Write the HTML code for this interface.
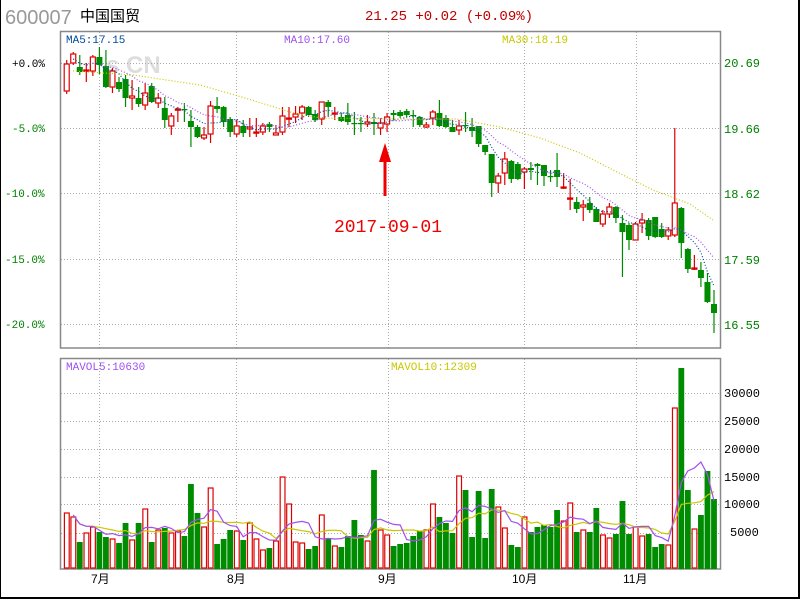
<!DOCTYPE html>
<html><head><meta charset="utf-8"><style>
body{margin:0;background:#fff;}
#w{position:relative;width:800px;height:600px;overflow:hidden;background:#fff;}
svg{position:absolute;left:0;top:0;}
</style></head><body><div id="w">
<svg id="s" width="800" height="600" xmlns="http://www.w3.org/2000/svg" font-family="Liberation Sans, Noto Sans CJK SC, sans-serif">
<rect x="0" y="-2" width="799" height="600" fill="none" stroke="#000" stroke-width="2"/>
<text x="5" y="24" font-size="20" fill="#999">600007</text>
<text x="80" y="21" font-size="15" fill="#000">中国国贸</text>
<text x="365" y="20" font-size="14" fill="#c00000" font-family="Liberation Mono">21.25 +0.02 (+0.09%)</text>
<text x="98" y="73" font-size="24" font-weight="bold" fill="#ddd">·s CN</text>
<g id="grid" stroke="#aaa" stroke-dasharray="1,2" stroke-width="1"></g>
<rect x="60.5" y="31.5" width="660" height="316.5" fill="none" stroke="#888" stroke-width="1.5"/>
<rect x="60.5" y="358.5" width="660" height="210.5" fill="none" stroke="#888" stroke-width="1.5"/>
<g id="c"></g>
<g font-family="Liberation Mono" font-size="11">
<text x="66" y="43" fill="#004a9e">MA5:17.15</text>
<text x="284" y="43" fill="#a050f0">MA10:17.60</text>
<text x="502" y="43" fill="#c8c800">MA30:18.19</text>
<text x="66" y="370" fill="#a050f0">MAVOL5:10630</text>
<text x="391" y="370" fill="#c8c800">MAVOL10:12309</text>
<text x="12" y="67" fill="#000">+0.0%</text>
<text x="12" y="132" fill="#008000">-5.0%</text>
<text x="5" y="197" fill="#008000">-10.0%</text>
<text x="5" y="263" fill="#008000">-15.0%</text>
<text x="5" y="328" fill="#008000">-20.0%</text>
</g>
<g font-family="Liberation Mono" font-size="12" fill="#008000">
<text x="724" y="67">20.69</text><text x="724" y="133">19.66</text><text x="724" y="198">18.62</text><text x="724" y="264">17.59</text><text x="724" y="329">16.55</text>
</g>
<g font-family="Liberation Mono" font-size="12" fill="#000">
<text x="724" y="397">30000</text><text x="724" y="425">25000</text><text x="724" y="453">20000</text><text x="724" y="481">15000</text><text x="724" y="508">10000</text><text x="730" y="536">5000</text>
</g>
<g font-size="12" fill="#000">
<text x="91" y="583">7月</text><text x="227" y="583">8月</text><text x="378" y="583">9月</text><text x="512" y="583">10月</text><text x="623" y="583">11月</text>
</g>
<line x1="385" y1="158" x2="385" y2="196" stroke="#e00" stroke-width="3"/>
<polygon points="385,143 379,162 391,162" fill="#e00"/>
<text x="334" y="232" font-size="18" fill="#e00" font-family="Liberation Mono">2017-09-01</text>
</svg>
<script>
var S="http://www.w3.org/2000/svg";
function el(p,t,a){var e=document.createElementNS(S,t);for(var k in a)e.setAttribute(k,a[k]);p.appendChild(e);return e;}
var g=document.getElementById('grid');
[63,128,193,259,324,393,421,449,477,504,533].forEach(function(y){el(g,'line',{x1:61,x2:720,y1:y+.5,y2:y+.5});});
[99,236,388,524,636].forEach(function(x){el(g,'line',{x1:x+.5,x2:x+.5,y1:32,y2:348});el(g,'line',{x1:x+.5,x2:x+.5,y1:359,y2:569});});
var C=[[64,91,60,94,'r'],[54,63,52,65,'r'],[67,72,55,75,'g'],[70,71,63,82,'r'],[57,71,55,76,'r'],[57,65,47,74,'g'],[66,87,50,88,'g'],[71,87,68,93,'r'],[82,89,77,92,'g'],[79,98,75,107,'g'],[96,98,80,110,'r'],[98,104,87,107,'g'],[93,105,83,110,'r'],[86,102,83,103,'g'],[98,103,93,108,'r'],[108,120,97,128,'g'],[116,126,113,135,'r'],[109,110,107,122,'r'],[109,110,103,122,'g'],[121,127,110,147,'g'],[127,137,125,138,'g'],[135,138,127,140,'r'],[106,134,101,143,'r'],[106,109,97,113,'g'],[107,122,106,127,'g'],[119,132,117,137,'g'],[126,134,120,137,'r'],[126,133,120,137,'g'],[127,129,118,137,'r'],[132,133,118,137,'r'],[126,132,123,135,'r'],[124,127,122,132,'g'],[133,135,125,135,'r'],[116,132,107,135,'r'],[118,119,107,127,'r'],[114,117,106,123,'r'],[107,113,105,120,'r'],[107,115,106,117,'g'],[114,120,110,122,'g'],[102,119,102,125,'r'],[102,107,100,117,'g'],[113,114,107,120,'r'],[117,121,113,122,'g'],[115,122,103,125,'g'],[123,124,112,135,'g'],[123,124,117,132,'g'],[122,124,115,127,'r'],[122,124,113,135,'g'],[123,128,118,135,'r'],[117,124,113,132,'r'],[113,115,110,120,'g'],
[112,116,110,118,'g'],[111,115,109,117,'g'],[115,116,110,127,'g'],[117,125,116,127,'g'],[125,127,122,128,'r'],[112,118,110,125,'r'],[113,126,100,127,'g'],[118,127,115,128,'g'],[127,132,120,132,'g'],[126,130,120,135,'r'],[125,126,112,132,'g'],[127,131,118,137,'g'],[126,144,126,147,'g'],[145,152,145,155,'g'],[154,183,154,197,'g'],[176,183,173,193,'r'],[159,173,152,185,'r'],[161,179,160,183,'g'],[164,179,162,180,'g'],[169,172,167,189,'r'],[168,170,162,180,'g'],[164,166,163,185,'g'],[165,176,165,186,'g'],[176,177,170,182,'g'],[170,177,153,187,'g'],[187,188,173,189,'r'],[198,199,179,210,'r'],[202,209,197,213,'g'],[205,207,200,221,'r'],[203,210,197,213,'g'],[209,222,207,222,'g'],[214,224,210,227,'r'],[207,214,203,218,'r'],[207,218,206,223,'g'],[223,232,215,277,'g'],[225,240,223,250,'g'],[224,240,222,240,'r'],[220,223,213,233,'r'],[220,236,218,240,'g'],[217,237,217,238,'g'],[229,237,223,238,'g'],[230,236,227,240,'r'],[203,235,128,237,'r'],[208,243,207,258,'g'],[249,269,248,273,'g'],[268,269,255,270,'r'],[270,278,262,287,'g'],[282,302,273,303,'g'],[304,313,290,333,'g']];
var V=[513,517,542,533,527,532,537,539,543,523,540,523,509,542,530,528,533,531,536,484,513,527,488,544,539,530,531,540,523,539,550,548,541,477,504,542,543,549,546,515,539,546,547,536,520,535,541,470,530,535,546,
544,543,536,531,530,504,517,523,533,476,490,537,491,538,489,507,528,545,547,517,532,527,525,527,510,521,503,532,530,532,508,535,538,534,501,534,527,536,534,547,544,545,408,368,490,529,515,471,499];
var c=document.getElementById('c');var N=C.length;
function X(i){return 66.7+i*(714-66.7)/(N-1);}
var closes=C.map(function(d){return d[4]=='r'?d[0]:d[1];});
function ma(a,n){return a.map(function(v,i){var s=0,k=0;for(var j=Math.max(0,i-n+1);j<=i;j++){s+=a[j];k++;}return s/k;});}
function line(arr,col,dash,w,start){var p='';for(var i=start||0;i<arr.length;i++)p+=(p?'L':'M')+X(i).toFixed(1)+','+arr[i].toFixed(1);el(c,'path',{d:p,fill:'none',stroke:col,'stroke-width':w,'stroke-dasharray':dash});}
C.forEach(function(d,i){var x=X(i),col=d[4]=='r'?'#d00':'#008c00';
el(c,'line',{x1:x,x2:x,y1:d[2],y2:d[3],stroke:col,'stroke-width':1.2});
var h=Math.max(d[1]-d[0],1.2);
if(d[4]=='r')el(c,'rect',{x:x-2.5,y:d[0],width:5,height:h,fill:'#fff',stroke:col,'stroke-width':1.2});
else el(c,'rect',{x:x-3,y:d[0],width:6,height:h,fill:col});
var vy=V[i];
if(d[4]=='r')el(c,'rect',{x:x-2.3,y:vy,width:4.8,height:568-vy,fill:'#fff',stroke:col,'stroke-width':1.2});
else el(c,'rect',{x:x-2.9,y:vy,width:5.8,height:569-vy,fill:col});
});
line(ma(closes,10),'#a050f0','1,2',1.2,1);
line(ma(closes,5),'#004a9e','1,2',1.2,1);
el(c,'path',{d:'M73,71 L133,75 L200,85 L245,98 L290,112 L320,118 L400,119 L457,119 L500,127 L540,138 L580,153 L617,172 L653,190 L690,204 L713,220',fill:'none',stroke:'#c8c800','stroke-width':1.2,'stroke-dasharray':'1,2'});
line(ma(V,10),'#c8c800','',1.2,1);
line(ma(V,5),'#a050f0','',1.2,1);
</script>
</div></body></html>
